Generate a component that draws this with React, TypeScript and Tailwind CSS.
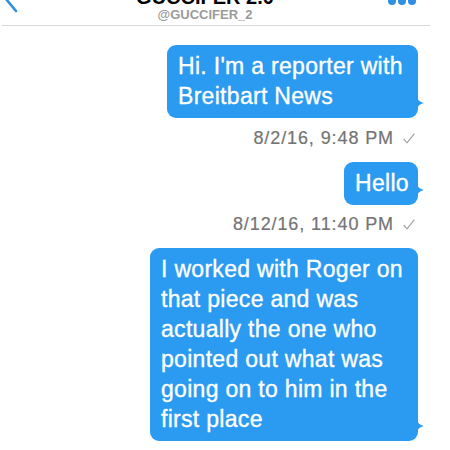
import React from "react";

type Msg = { lines: string[]; time: string; width: string };

const messages: Msg[] = [
  {
    lines: ["Hi. I'm a reporter with", "Breitbart News"],
    time: "8/2/16, 9:48 PM",
    width: "w-[251px]",
  },
  { lines: ["Hello"], time: "8/12/16, 11:40 PM", width: "w-[74px]" },
  {
    lines: [
      "I worked with Roger on",
      "that piece and was",
      "actually the one who",
      "pointed out what was",
      "going on to him in the",
      "first place",
    ],
    time: "",
    width: "w-[268px]",
  },
];

function Bubble({ msg }: { msg: Msg }) {
  return (
    <div className={`relative ${msg.width} rounded-[9px] bg-[#2a9bf0] pl-[11px] pt-[6px] pb-[7px] text-[23px] leading-[30px] tracking-[0.3px] text-white [-webkit-text-stroke:0.35px_white]`}>
      {msg.lines.map((line, i) => (
        <div key={i} className="whitespace-nowrap">
          {line}
        </div>
      ))}
      {/* tail */}
      <svg
        className="absolute right-[-6px] bottom-[10px]"
        width="7"
        height="10"
        viewBox="0 0 7 10"
      >
        <path d="M0 0 Q2 4 7 5 Q2 6 0 10 Z" fill="#2a9bf0" />
      </svg>
    </div>
  );
}

function Timestamp({ time, className }: { time: string; className: string }) {
  return (
    <div className={`flex items-center justify-end gap-[9px] pr-[3px] text-[18px] leading-[20px] tracking-[0.9px] text-[#747474] [-webkit-text-stroke:0.2px_#747474] ${className}`}>
      <span>{time}</span>
      <svg width="12" height="11" viewBox="0 0 12 11" className="mt-[1px]">
        <polyline
          points="0.8,6 4,9.8 11.4,0.6"
          fill="none"
          stroke="#a3a3a3"
          strokeWidth="1.2"
        />
      </svg>
    </div>
  );
}

export default function App() {
  return (
    <div className="h-[450px] w-[450px] overflow-hidden bg-white font-['Liberation_Sans',Arial,sans-serif]">
      <div className="relative w-[432px]">
        <div className="flex items-start justify-between">
          <svg width="20" height="14" viewBox="0 0 20 14" className="ml-[2px]">
            <path d="M4 -1 L14 11" stroke="#2f8fe0" strokeWidth="2.6" strokeLinecap="round" fill="none" />
          </svg>
          <div className="flex flex-col items-center">
            <div className="mt-[-13px] text-[20px] font-bold leading-[20px] text-black">
              GUCCIFER 2.0
            </div>
            <div className="text-[13px] font-bold leading-[16px] text-[#9a9a9a]">
              @GUCCIFER_2
            </div>
          </div>
          <div className="mr-[16px] mt-[-3px] flex gap-[2px]">
            <span className="h-[8px] w-[8px] rounded-full bg-[#2f8fe0]" />
            <span className="h-[8px] w-[8px] rounded-full bg-[#2f8fe0]" />
            <span className="h-[8px] w-[8px] rounded-full bg-[#2f8fe0]" />
          </div>
        </div>
        <div className="ml-[2px] mt-[2px] h-px w-[428px] bg-[#dadada]" />
      </div>

      <div className="flex flex-col items-end pr-[32px]">
        <div className="mt-[19px]">
          <Bubble msg={messages[0]} />
        </div>
        <Timestamp time={messages[0].time} className="mt-[10px]" />
        <div className="mt-[14px]">
          <Bubble msg={messages[1]} />
        </div>
        <Timestamp time={messages[1].time} className="mt-[9px]" />
        <div className="mt-[14px]">
          <Bubble msg={messages[2]} />
        </div>
      </div>
    </div>
  );
}
